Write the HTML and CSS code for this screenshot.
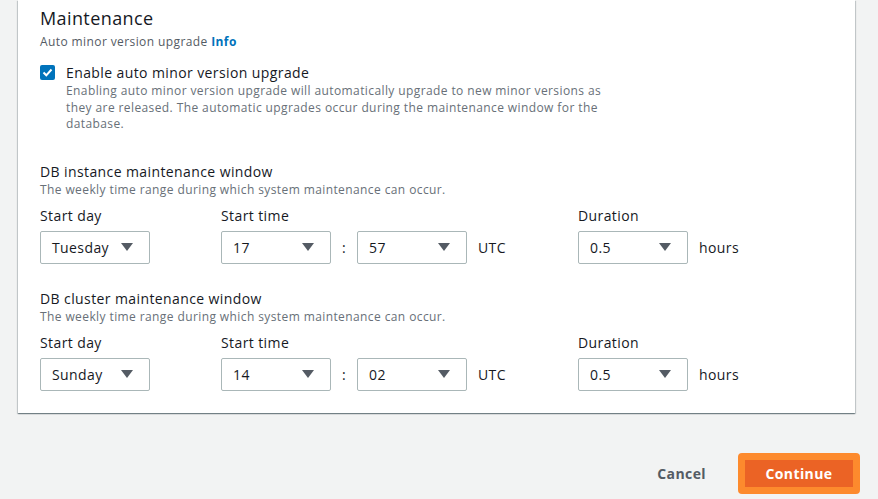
FILE: index.html
```html
<!DOCTYPE html>
<html>
<head>
<meta charset="utf-8">
<link rel="stylesheet" href="styles.css">
</head>
<body>
<div class="page">
  <section class="card">
    <h2 class="title">Maintenance</h2>
    <div class="field-label-sm">Auto minor version upgrade <a class="info">Info</a></div>
    <div class="check-row">
      <span class="checkbox">
        <svg width="15" height="15" viewBox="0 0 15 15"><rect x="0" y="0" width="15" height="15" rx="2" fill="#0073bb"/><path d="M3.5 7.5 L6.3 10.3 L11.5 4.5" fill="none" stroke="#fff" stroke-width="2"/></svg>
      </span>
      <div class="check-text">
        <div class="check-label">Enable auto minor version upgrade</div>
        <div class="check-desc">Enabling auto minor version upgrade will automatically upgrade to new minor versions as they are released. The automatic upgrades occur during the maintenance window for the database.</div>
      </div>
    </div>

    <div class="window first">
      <div class="win-title">DB instance maintenance window</div>
      <div class="win-desc">The weekly time range during which system maintenance can occur.</div>
      <div class="win-grid">
        <div class="col col-day">
          <div class="lbl">Start day</div>
          <div class="select"><span>Tuesday</span><i class="caret"></i></div>
        </div>
        <div class="col col-time">
          <div class="lbl">Start time</div>
          <div class="time-row">
            <div class="select"><span>17</span><i class="caret"></i></div>
            <span class="colon">:</span>
            <div class="select"><span>57</span><i class="caret"></i></div>
            <span class="unit">UTC</span>
          </div>
        </div>
        <div class="col col-dur">
          <div class="lbl">Duration</div>
          <div class="time-row">
            <div class="select"><span>0.5</span><i class="caret"></i></div>
            <span class="unit">hours</span>
          </div>
        </div>
      </div>
    </div>

    <div class="window second">
      <div class="win-title">DB cluster maintenance window</div>
      <div class="win-desc">The weekly time range during which system maintenance can occur.</div>
      <div class="win-grid">
        <div class="col col-day">
          <div class="lbl">Start day</div>
          <div class="select"><span>Sunday</span><i class="caret"></i></div>
        </div>
        <div class="col col-time">
          <div class="lbl">Start time</div>
          <div class="time-row">
            <div class="select"><span>14</span><i class="caret"></i></div>
            <span class="colon">:</span>
            <div class="select"><span>02</span><i class="caret"></i></div>
            <span class="unit">UTC</span>
          </div>
        </div>
        <div class="col col-dur">
          <div class="lbl">Duration</div>
          <div class="time-row">
            <div class="select"><span>0.5</span><i class="caret"></i></div>
            <span class="unit">hours</span>
          </div>
        </div>
      </div>
    </div>
  </section>

  <div class="actions">
    <button class="btn-link">Cancel</button>
    <button class="btn-primary">Continue</button>
  </div>
</div>
</body>
</html>
```

FILE: styles.css
```css
* { box-sizing: border-box; }
html, body {
  margin: 0;
  padding: 0;
  background: #f2f3f3;
  font-family: "Open Sans", "Liberation Sans", Arial, sans-serif;
  letter-spacing: 0.025em;
  color: #16191f;
}
.page {
  width: 878px;
  height: 499px;
  overflow: hidden;
  padding: 0 0 0 18px;
}
.card {
  width: 837px;
  background: #fff;
  padding: 7px 22px 22px 22px;
  box-shadow: 0 1px 1px 0 rgba(0, 28, 36, 0.35), 1px 1px 1px 0 rgba(0, 28, 36, 0.15), -1px 1px 1px 0 rgba(0, 28, 36, 0.15);
}
.title {
  margin: 0;
  font-size: 18px;
  line-height: 22px;
  font-weight: 400;
}
.field-label-sm {
  margin-top: 5px;
  font-size: 12px;
  line-height: 16px;
  color: #545b64;
}
.info {
  color: #0073bb;
  font-weight: 700;
}
.check-row {
  display: flex;
  margin-top: 13px;
}
.checkbox {
  width: 15px;
  height: 15px;
  margin-top: 2px;
  margin-right: 11px;
  flex: none;
  display: flex;
}
.check-label {
  font-size: 14px;
  line-height: 20px;
}
.check-desc {
  width: 550px;
  font-size: 12px;
  line-height: 16.5px;
  color: #687078;
}
.window.first { margin-top: 29px; }
.window.second { margin-top: 25px; }
.win-title {
  font-size: 14px;
  line-height: 20px;
}
.win-desc {
  font-size: 12px;
  line-height: 16px;
  color: #687078;
}
.win-grid {
  display: grid;
  grid-template-columns: 181px 357px auto;
  margin-top: 8px;
}
.lbl {
  font-size: 14px;
  line-height: 20px;
  margin-bottom: 5px;
}
.time-row {
  display: flex;
  align-items: center;
}
.select {
  width: 110px;
  height: 33px;
  border: 1px solid #aab7b8;
  border-radius: 2px;
  display: flex;
  align-items: center;
  justify-content: space-between;
  padding: 0 16px 0 11px;
  font-size: 14px;
}
.caret {
  width: 0;
  height: 0;
  border-left: 6px solid transparent;
  border-right: 6px solid transparent;
  border-top: 8px solid #545b64;
}
.colon {
  width: 26px;
  text-align: center;
  font-size: 14px;
}
.unit {
  margin-left: 11px;
  font-size: 14px;
}
.actions {
  display: flex;
  justify-content: flex-end;
  align-items: center;
  margin-top: 40px;
  padding-right: 0;
  width: 842px;
}
.btn-link {
  background: none;
  border: none;
  font-family: inherit;
  letter-spacing: inherit;
  font-size: 14px;
  font-weight: 700;
  color: #545b64;
  margin-right: 32px;
  padding: 0;
}
.btn-primary {
  width: 122px;
  height: 41px;
  background: #eb6325;
  border: 7px solid #fd8a2d;
  border-radius: 4px;
  color: #fff;
  font-family: inherit;
  letter-spacing: inherit;
  font-size: 14px;
  font-weight: 700;
  padding: 0;
}
```
